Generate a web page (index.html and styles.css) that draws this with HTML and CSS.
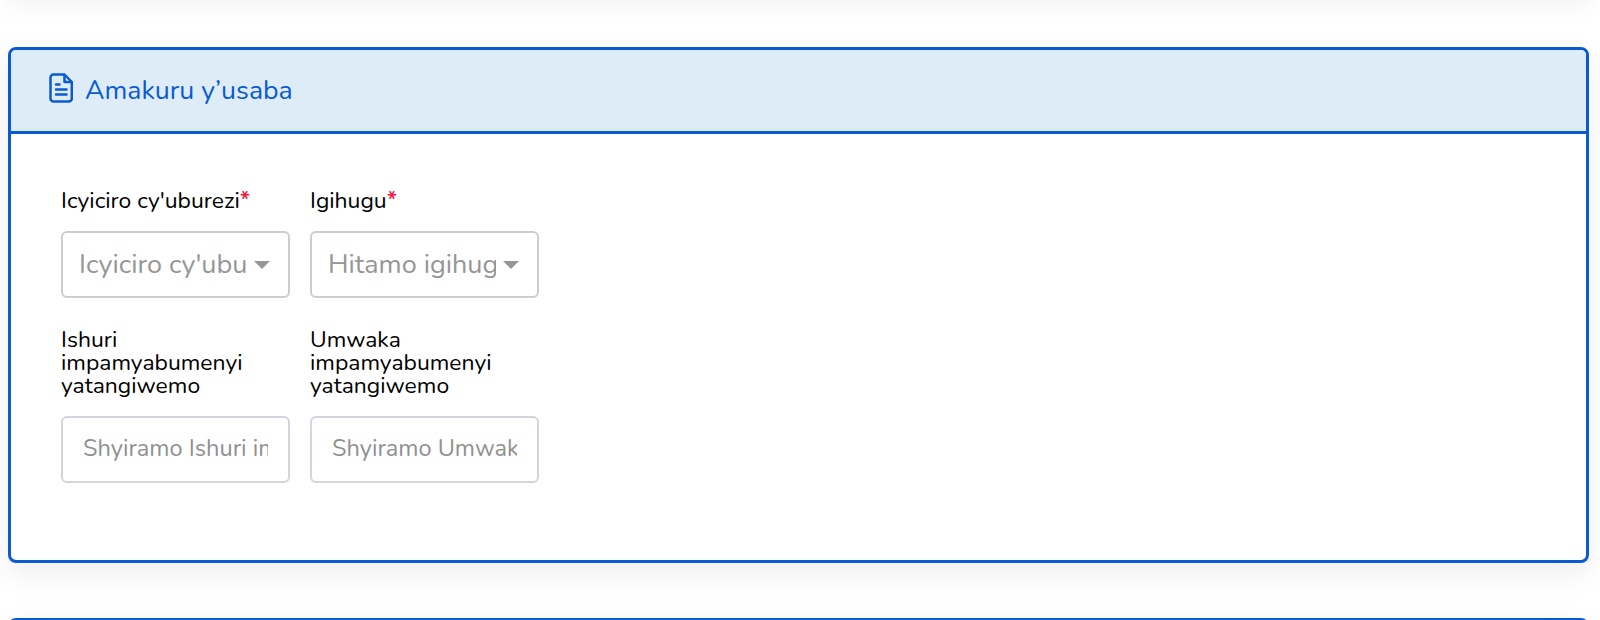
FILE: index.html
```html
<!DOCTYPE html>
<html lang="rw">
<head>
<meta charset="utf-8">
<title>Amakuru y'usaba</title>
<link rel="stylesheet" href="styles.css">
</head>
<body>
<div class="page">
  <div class="card card-prev"></div>
  <section class="card">
    <header class="card-head">
      <svg class="doc-icon" viewBox="0 0 24 30" width="24" height="30" fill="none" stroke="currentColor" stroke-width="2.500" stroke-linejoin="round" stroke-linecap="round">
        <path d="M4.500 1.500H15.500L22.800 9V25.500a3 3 0 0 1-3 3H4.500a3 3 0 0 1-3-3V4.500a3 3 0 0 1 3-3Z"/>
        <path d="M15.500 2v7h6.800"/>
        <path d="M7 11.500H10.500M7 16.500H17.500M7 21.500H17.500"/>
      </svg>
      <h2 class="card-title">Amakuru y’usaba</h2>
    </header>
    <div class="card-body">
      <div class="form-grid">
        <div class="field">
          <label class="field-label">Icyiciro cy'uburezi<span class="req">*</span></label>
          <div class="select">
            <span class="select-text">Icyiciro cy'uburezi</span>
            <span class="caret"></span>
          </div>
        </div>
        <div class="field">
          <label class="field-label">Igihugu<span class="req">*</span></label>
          <div class="select">
            <span class="select-text">Hitamo igihugu</span>
            <span class="caret"></span>
          </div>
        </div>
        <div class="field">
          <label class="field-label">Ishuri impamyabumenyi yatangiwemo</label>
          <input class="text-input" type="text" placeholder="Shyiramo Ishuri impamyabumenyi yatangiwemo">
        </div>
        <div class="field">
          <label class="field-label">Umwaka impamyabumenyi yatangiwemo</label>
          <input class="text-input" type="text" placeholder="Shyiramo Umwaka impamyabumenyi yatangiwemo">
        </div>
      </div>
    </div>
  </section>
  <div class="card card-next"></div>
</div>
</body>
</html>
```
FILE: styles.css
```css
* { box-sizing: border-box; }
html, body { margin: 0; height: 100%; overflow: hidden; background: #fff; }
body { font-family: "Nunito", "Open Sans", "Noto Sans", sans-serif; }
.page {
  display: flex;
  flex-direction: column;
  gap: 55px;
  padding: 0 11px 0 8px;
  margin-top: -68px;
  height: 688px;
  overflow: hidden;
}
.card {
  flex: none;
  border: 3px solid #0a5bd3;
  border-radius: 8px;
  background: #fff;
  box-shadow: 0 10px 30px rgba(0, 0, 0, 0.07);
  overflow: hidden;
}
.card-prev { height: 60px; border: 0; border-radius: 0; }
.card-next { height: 60px; }
.card-head {
  display: flex;
  align-items: center;
  gap: 12px;
  height: 84px;
  padding: 0 0 1px 38px;
  background: #deecf8;
  border-bottom: 3px solid #0a5bd3;
  color: #0a5bd3;
}
.doc-icon { flex: none; margin-bottom: 4px; }
.card-title { margin: 0; font-size: 26.700px; font-weight: 400; }
.card-body { padding: 55px 50px 77px 50px; }
.form-grid {
  display: grid;
  grid-template-columns: 228.500px 229px;
  column-gap: 20.500px;
  row-gap: 30px;
}
.field { display: flex; flex-direction: column; justify-content: flex-end; }
.field-label {
  display: block;
  margin-bottom: 19px;
  font-size: 22.900px;
  line-height: 23px;
  color: #000;
}
.req { color: #ff0f40; font-weight: 600; }
.select {
  display: flex;
  align-items: center;
  height: 67px;
  padding: 0 18px 0 16px;
  border: 2px solid #cdcdcd;
  border-radius: 6px;
  color: #969696;
  font-size: 27px;
}
.select-text { flex: 1; min-width: 0; white-space: nowrap; overflow: hidden; }
.caret {
  flex: none;
  margin-left: 7px;
  border-left: 8px solid transparent;
  border-right: 8px solid transparent;
  border-top: 8px solid #969696;
}
.text-input {
  width: 100%;
  height: 67px;
  padding: 0 20px 3px 20px;
  border: 2px solid #d0d5de;
  border-radius: 6px;
  outline: 0;
  background: #fff;
  font-family: inherit;
  font-size: 23.600px;
}
.text-input::placeholder { color: #909090; opacity: 1; }
```
